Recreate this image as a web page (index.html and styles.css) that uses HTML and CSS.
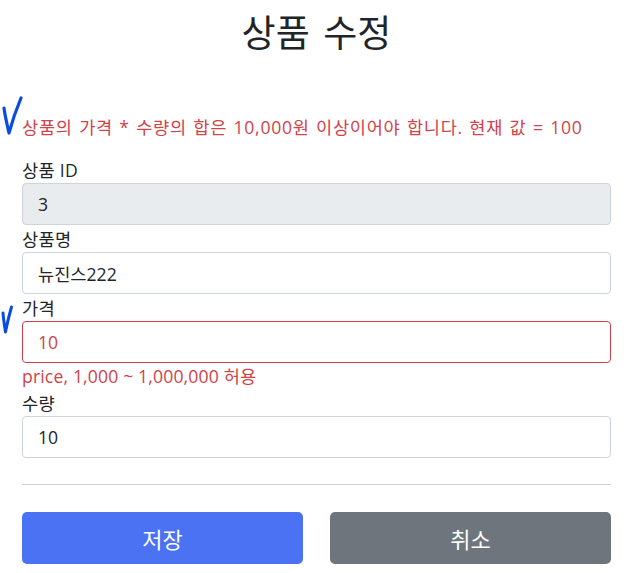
FILE: index.html
```html
<!DOCTYPE html>
<html lang="ko">
<head>
<meta charset="utf-8">
<link rel="stylesheet" href="styles.css">
</head>
<body>
<div class="container">
  <div class="title"><h2>상품 수정</h2></div>
  <form class="form">
    <div class="global-error">
      <svg class="check check-global" width="24" height="44" viewBox="0 0 24 44"><path d="M4 16 C5 24 7 32 9 41 C12 30 16 18 21 6" fill="none" stroke="#0b4be0" stroke-width="3.2" stroke-linecap="round" stroke-linejoin="round"/></svg>
      <p class="field-error">상품의 가격 * 수량의 합은 10,000원 이상이어야 합니다. 현재 값 = 100</p>
    </div>
    <div class="field">
      <label>상품 ID</label>
      <input class="form-control" value="3" readonly>
    </div>
    <div class="field">
      <label>상품명</label>
      <input class="form-control" value="뉴진스222">
    </div>
    <div class="field">
      <svg class="check check-price" width="14" height="32" viewBox="0 0 14 32"><path d="M3 10 C3.5 17 4.5 23 5.5 29 C7 21 9 13 11.5 4" fill="none" stroke="#0b4be0" stroke-width="3" stroke-linecap="round" stroke-linejoin="round"/></svg>
      <label>가격</label>
      <input class="form-control is-invalid" value="10">
      <div class="invalid-feedback">price, 1,000 ~ 1,000,000 허용</div>
    </div>
    <div class="field">
      <label>수량</label>
      <input class="form-control" value="10">
    </div>
    <hr class="divider">
    <div class="buttons">
      <button type="button" class="btn btn-primary">저장</button>
      <button type="button" class="btn btn-secondary">취소</button>
    </div>
  </form>
</div>
</body>
</html>
```
FILE: styles.css
```css
* { box-sizing: border-box; }
html, body {
  margin: 0;
  padding: 0;
  background: #fff;
}
body {
  font-family: "Open Sans", "Noto Sans CJK KR", sans-serif;
  font-size: 17.6px;
  color: #212529;
}
.container {
  width: 627px;
  padding: 0 16px 0 22px;
}
.title {
  text-align: center;
  padding-top: 6px;
  height: 90px;
}
.title h2 {
  margin: 0;
  font-weight: 400;
  font-size: 37px;
  line-height: 54px;
  word-spacing: 4px;
}
.global-error {
  position: relative;
  height: 66px;
  padding-top: 24px;
}
.field-error {
  margin: 0;
  color: #cf434b;
  line-height: 26px;
  letter-spacing: 0.7px;
  word-spacing: 1.2px;
  white-space: nowrap;
}
.check {
  position: absolute;
}
.check-global {
  left: -22px;
  top: 2px;
}
.field {
  position: relative;
}
.check-price {
  left: -22px;
  top: 9px;
}
label {
  display: block;
  height: 27px;
  line-height: 26px;
  padding-top: 1px;
  letter-spacing: 0.3px;
}
.form-control {
  display: block;
  width: 589px;
  height: 42px;
  padding: 0 15px;
  font-family: inherit;
  font-size: 17.6px;
  color: #212529;
  background: #fff;
  border: 1px solid #ced4da;
  border-radius: 4px;
  outline: none;
}
.form-control[readonly] {
  background: #e9ecef;
}
.form-control.is-invalid {
  border-color: #cf3f48;
  color: #cf434b;
}
.invalid-feedback {
  color: #cf434b;
  line-height: 26px;
  height: 26px;
  letter-spacing: 0.15px;
}
.divider {
  margin: 26px 0 0;
  border: 0;
  border-top: 1px solid #cfcfcf;
  height: 0;
}
.buttons {
  display: grid;
  grid-template-columns: 1fr 1fr;
  column-gap: 27px;
  margin-top: 27px;
}
.btn {
  height: 52px;
  border: 0;
  border-radius: 5px;
  font-family: inherit;
  font-size: 22px;
  color: #fff;
}
.btn-primary { background: #4a72f3; }
.btn-secondary { background: #6e757d; }
```
